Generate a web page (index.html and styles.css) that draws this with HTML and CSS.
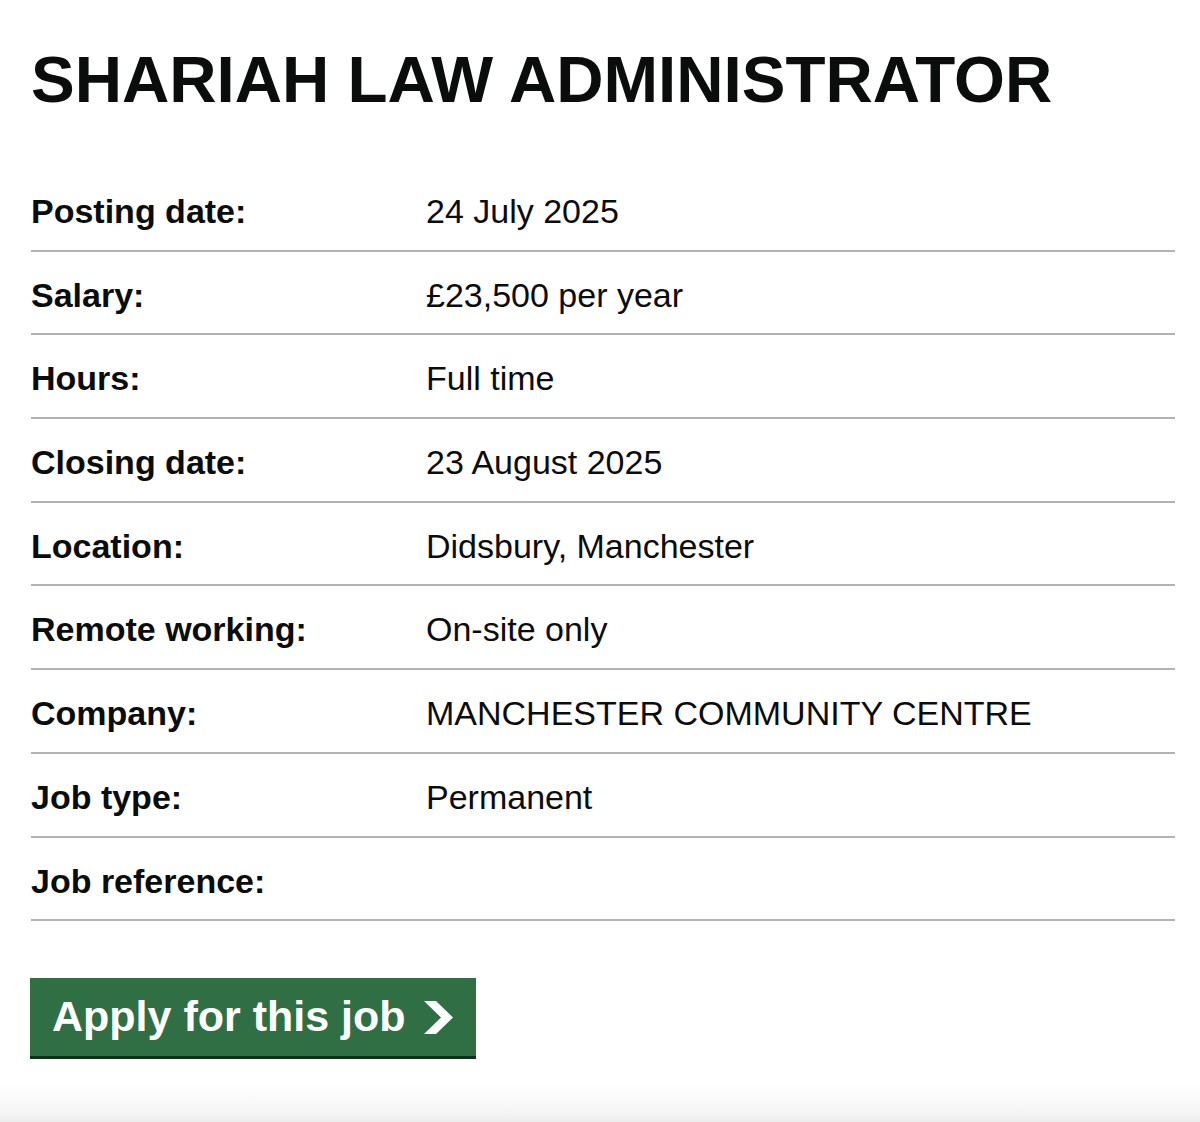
FILE: index.html
```html
<!DOCTYPE html>
<html lang="en">
<head>
<meta charset="utf-8">
<title>Shariah Law Administrator</title>
<link rel="stylesheet" href="styles.css">
</head>
<body>
<main class="page">
  <h1 class="title">SHARIAH LAW ADMINISTRATOR</h1>
  <dl class="details">
    <div class="row"><dt>Posting date:</dt><dd>24 July 2025</dd></div>
    <div class="row"><dt>Salary:</dt><dd>£23,500 per year</dd></div>
    <div class="row"><dt>Hours:</dt><dd>Full time</dd></div>
    <div class="row"><dt>Closing date:</dt><dd>23 August 2025</dd></div>
    <div class="row"><dt>Location:</dt><dd>Didsbury, Manchester</dd></div>
    <div class="row"><dt>Remote working:</dt><dd>On-site only</dd></div>
    <div class="row"><dt>Company:</dt><dd>MANCHESTER COMMUNITY CENTRE</dd></div>
    <div class="row"><dt>Job type:</dt><dd>Permanent</dd></div>
    <div class="row"><dt>Job reference:</dt><dd></dd></div>
  </dl>
  <a class="apply" href="#">
    <span>Apply for this job</span>
    <svg class="chev" width="29" height="33" viewBox="0 0 29 33" aria-hidden="true"><polygon points="0,0 12,0 29,16.5 12,33 0,33 17,16.5" fill="#ffffff"/></svg>
  </a>
</main>
<div class="fade"></div>
</body>
</html>
```

FILE: styles.css
```css
html, body {
  margin: 0;
  padding: 0;
  background: #ffffff;
  color: #0b0c0c;
  font-family: "Liberation Sans", Arial, Helvetica, sans-serif;
}
body {
  height: 1122px;
  overflow: hidden;
  display: flex;
  flex-direction: column;
}
.page {
  flex: 1;
  padding: 0 25px 0 31px;
}
.title {
  margin: 41px 0 0;
  font-size: 65.5px;
  line-height: 77px;
  font-weight: 700;
}
.details {
  margin: 50px 0 0;
}
.row {
  display: flex;
  padding: 23px 0 17.7px;
  border-bottom: 2px solid #b3b3b3;
  font-size: 34px;
  line-height: 41px;
  height: 41px;
}
.row dt {
  width: 395px;
  flex: none;
  font-weight: 700;
}
.row dd {
  margin: 0;
}
.apply {
  margin-top: 57px;
  display: inline-flex;
  align-items: center;
  gap: 18px;
  height: 78px;
  padding: 0 23px 0 22px;
  background: #306f43;
  border-bottom: 3px solid #10301b;
  margin-left: -1px;
  color: #ffffff;
  text-decoration: none;
  font-size: 43px;
  font-weight: 700;
  box-sizing: content-box;
}
.apply span {
  line-height: 1;
  padding-bottom: 2px;
}
.chev {
  display: block;
}
.fade {
  height: 42px;
  flex: none;
  background: linear-gradient(to bottom, #ffffff 0%, #fcfcfc 35%, #f4f4f4 80%, #ececec 100%);
}
```
